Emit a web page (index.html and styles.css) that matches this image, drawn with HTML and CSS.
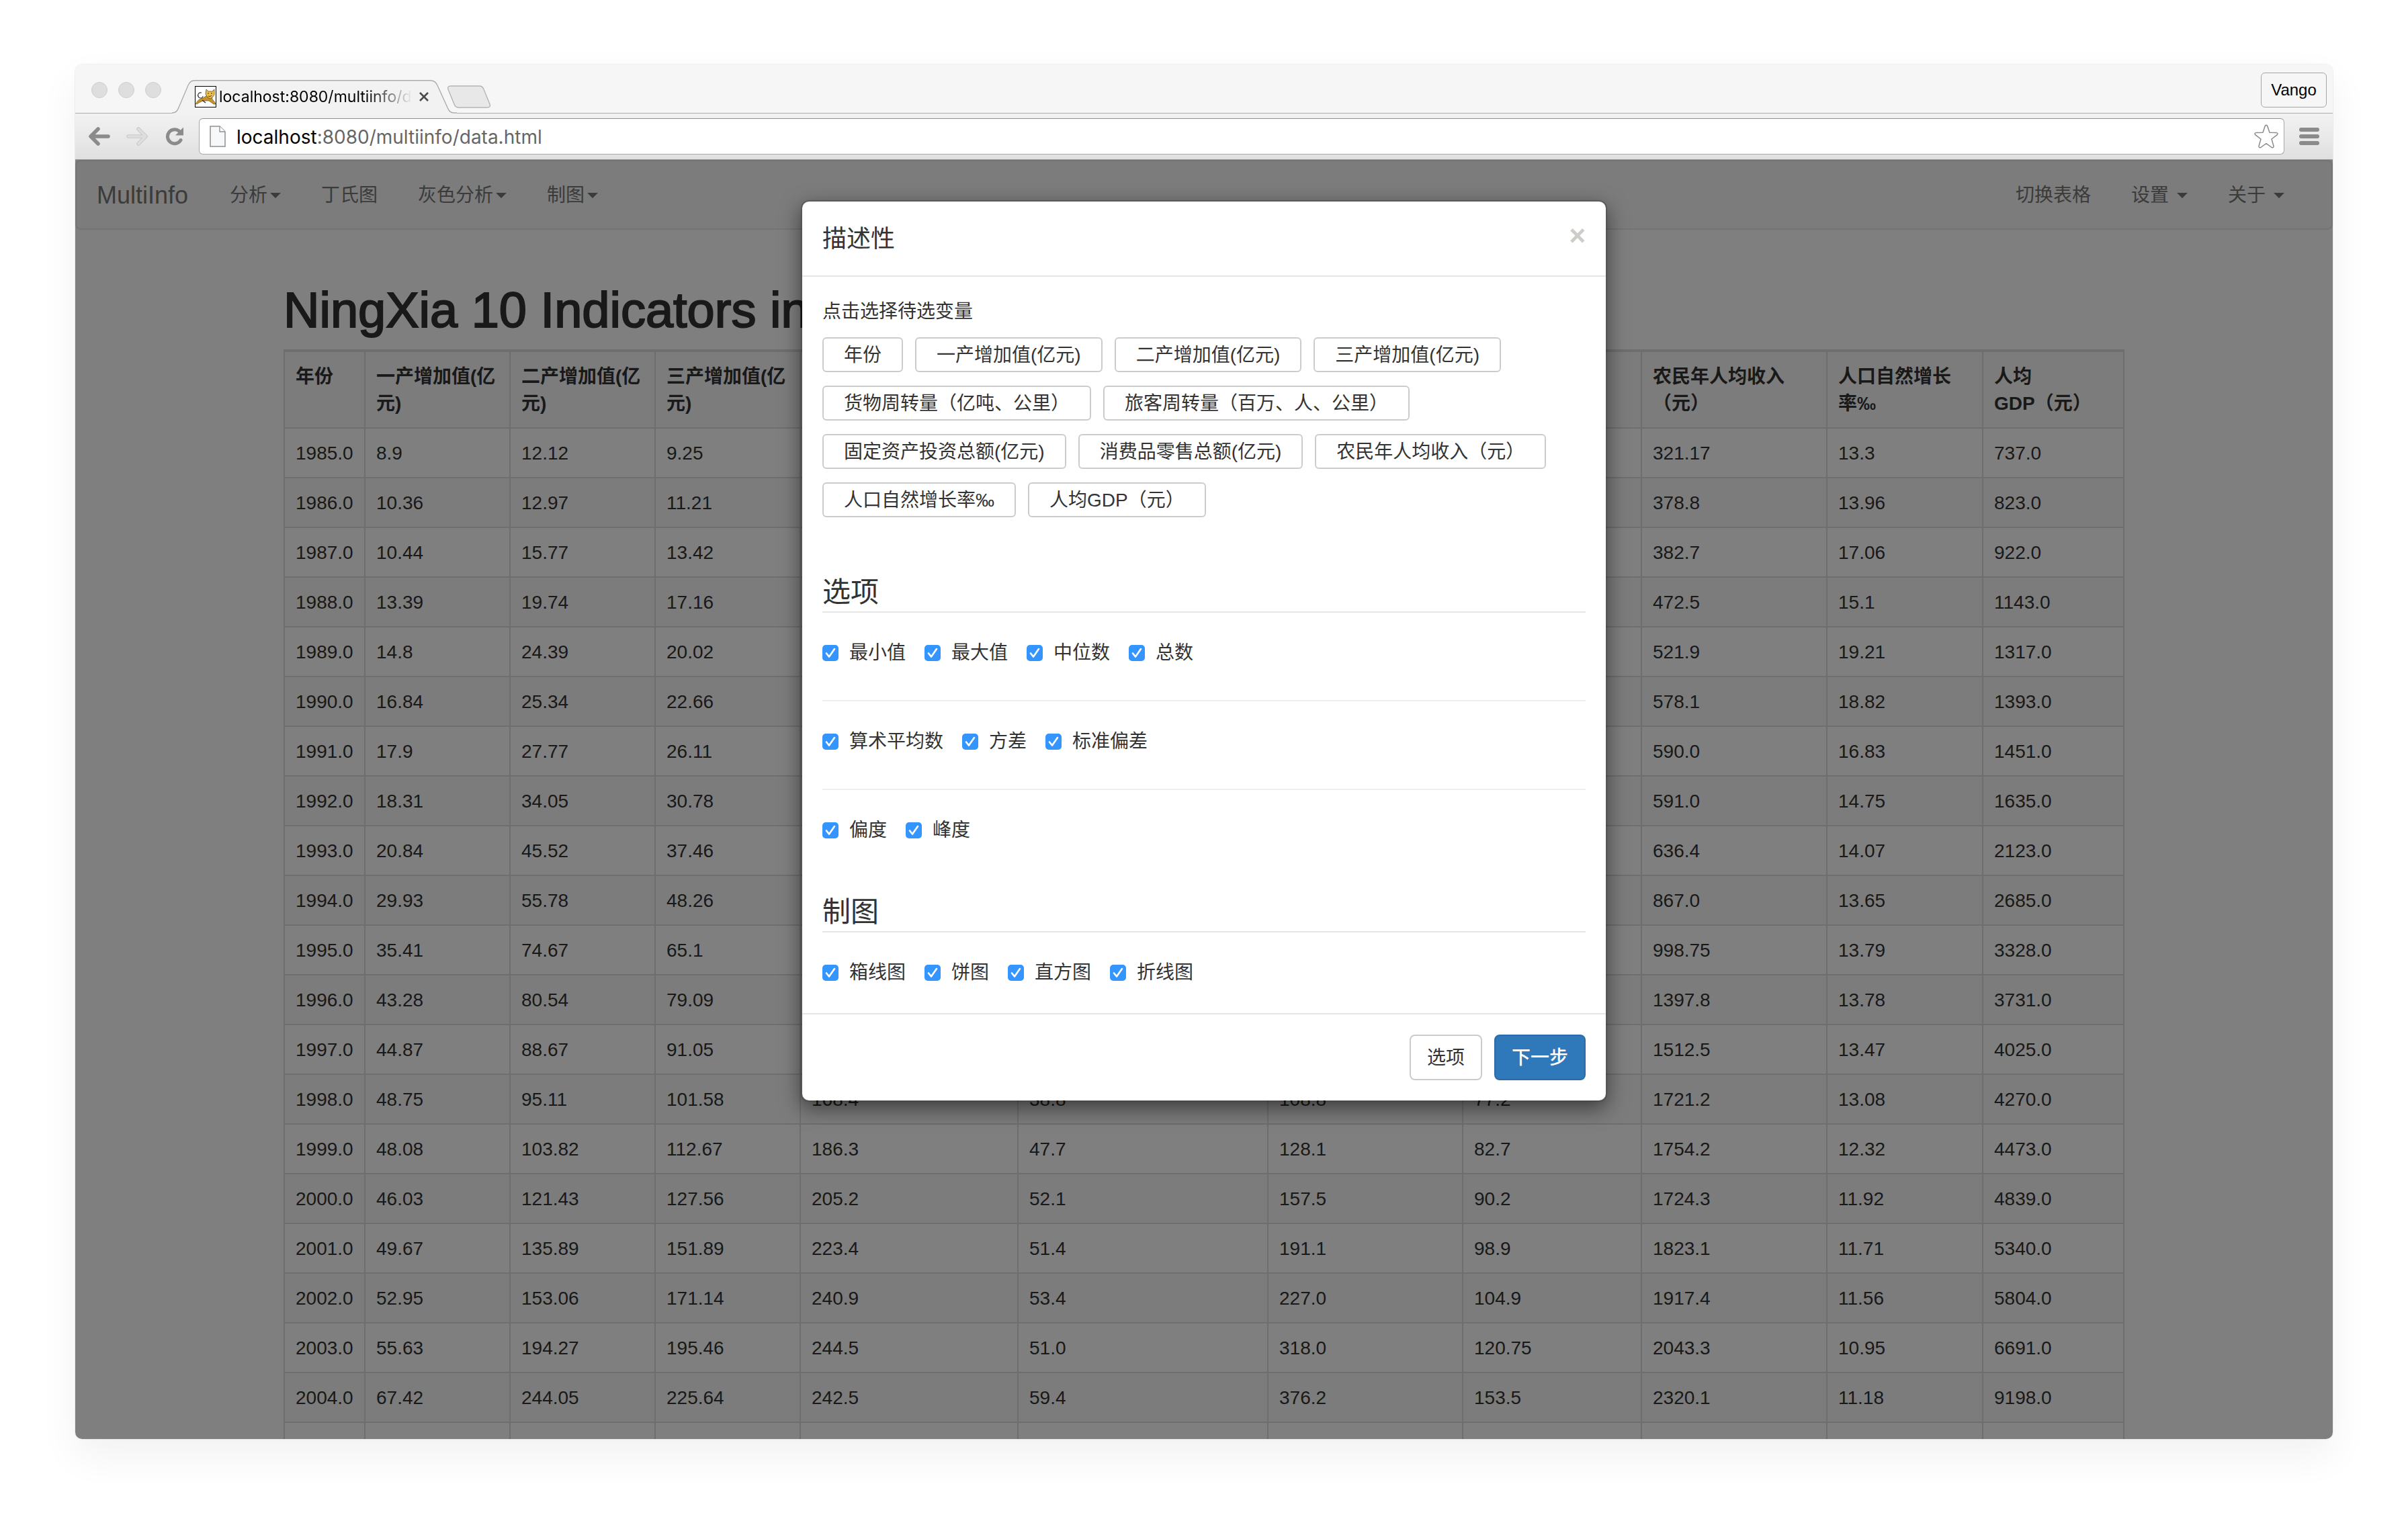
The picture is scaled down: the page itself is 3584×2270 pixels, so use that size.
FILE: index.html
```html
<!DOCTYPE html>
<html lang="zh-CN">
<head>
<meta charset="utf-8">
<title>MultiInfo</title>
<link rel="stylesheet" href="styles.css">
</head>
<body>
<div class="window">
  <header class="chrome">
    <div class="tabstrip">
      <div class="lights"><span></span><span></span><span></span></div>
      <div class="tab">
        <svg class="tab-shape" viewBox="0 0 424 50" preserveAspectRatio="none" aria-hidden="true">
          <path d="M0 50V49C6 49 8 46 10 41L24 8C27 2 29 .8 36 .8H384C390 .8 393 3 395 8L410 41C412 46 414 49 420 49H424V50Z" fill="#f2f2f2"/>
          <path d="M0 49C6 49 8 46 10 41L24 8C27 2 29 .8 36 .8H384C390 .8 393 3 395 8L410 41C412 46 414 49 420 49H424" fill="none" stroke="#acacac" stroke-width="1.4"/>
        </svg>
        <svg class="favicon" viewBox="0 0 32 32" aria-hidden="true">
          <rect x=".5" y=".5" width="31" height="31" fill="#fff" stroke="#000"/>
          <path d="M10 10C5 9 3 14 6 17C9 19 12 18 12 15" fill="none" stroke="#333" stroke-width="1.1"/>
          <path d="M1.500 27C3 22 7 19 12 18L18 14L25 17C26 21 30 23 31 27H28L21 22L12 22L6 25L3 27Z" fill="#c8922a" stroke="#5b4720" stroke-width=".6"/>
          <path d="M11 21L16 25" stroke="#333" stroke-width="1.6"/>
          <path d="M17 5L20 8H26L29 5V13L26 17L23 19L19 17L16 12Z" fill="#efc04a" stroke="#4d3a12" stroke-width=".7"/>
          <path d="M20 10V12M25 10V12M20 15Q23 17 25 14" stroke="#3b2f14" fill="none"/>
        </svg>
        <span class="tab-title">localhost:8080/multiinfo/d</span>
        <button class="tab-close" type="button" aria-label="关闭标签页">
          <svg viewBox="0 0 14 14" aria-hidden="true"><path d="M1 1L13 13M13 1L1 13" stroke="#4a4a4a" stroke-width="2.6"/></svg>
        </button>
      </div>
      <button class="new-tab" type="button" aria-label="新标签页">
        <svg viewBox="0 0 64 34" aria-hidden="true"><path d="M5 1H47C51 1 53 3 54 6L63 28C64 31 63 33 59 33H17C13 33 11 31 10 28L1 6C0 3 1 1 5 1Z" fill="#e8e8e8" stroke="#b4b4b4" stroke-width="1.4"/></svg>
      </button>
      <button class="profile" type="button">Vango</button>
    </div>
    <div class="toolbar">
      <button class="tool" type="button" aria-label="后退">
        <svg viewBox="0 0 32 28" aria-hidden="true"><path d="M14 3L3 14L14 25M4 14H29" fill="none" stroke="#8b8b8b" stroke-width="5.5" stroke-linecap="round" stroke-linejoin="round"/></svg>
      </button>
      <button class="tool" type="button" aria-label="前进">
        <svg viewBox="0 0 32 28" aria-hidden="true"><path d="M18 3L29 14L18 25M28 14H3" fill="none" stroke="#c9c9c9" stroke-width="5.5" stroke-linecap="round" stroke-linejoin="round"/><path d="M18 3L29 14L18 25M26 14H3" fill="none" stroke="#dedede" stroke-width="3.5" stroke-linecap="round" stroke-linejoin="round"/></svg>
      </button>
      <button class="tool reload" type="button" aria-label="重新加载">
        <svg viewBox="0 0 28 28" aria-hidden="true"><path d="M21.5 7A10.500 10.500 0 1 0 23 19.500" fill="none" stroke="#8b8b8b" stroke-width="5" stroke-linecap="round"/><path d="M27 .5V12.500H15Z" fill="#8b8b8b"/></svg>
      </button>
      <div class="omnibox">
        <svg class="page-icon" viewBox="0 0 24 32" aria-hidden="true"><path d="M1 1H15L23 9V31H1Z" fill="#f7f8fa" stroke="#8e8e8e" stroke-width="1.5"/><path d="M15 1V9H23" fill="#fff" stroke="#8e8e8e" stroke-width="1.3"/></svg>
        <p class="url"><b>localhost</b>:8080/multiinfo/data.html</p>
        <svg class="star" viewBox="0 0 36 36" aria-hidden="true"><path d="M16.300 2.500Q18 .2 19.700 2.500L23 12.200L33.500 12.600Q36 13.500 34.300 15.600L26 22L29 32.500Q29.200 35.500 26.300 34.500L18 28.700L9.700 34.500Q6.800 35.500 7 32.500L10 22L1.700 15.600Q0 13.500 2.500 12.600L13 12.200Z" fill="#fff" stroke="#8a8a8a" stroke-width="1.5" stroke-linejoin="round"/></svg>
      </div>
      <button class="menu" type="button" aria-label="菜单"><span></span><span></span><span></span></button>
    </div>
  </header>

  <div class="viewport">
    <nav class="navbar">
      <a class="brand" href="#">MultiInfo</a>
      <ul class="nav">
        <li><a href="#">分析<i class="caret"></i></a></li>
        <li><a href="#">丁氏图</a></li>
        <li><a href="#">灰色分析<i class="caret"></i></a></li>
        <li><a href="#">制图<i class="caret"></i></a></li>
      </ul>
      <ul class="nav nav-right">
        <li><a href="#">切换表格</a></li>
        <li><a href="#">设置<i class="caret"></i></a></li>
        <li><a href="#">关于<i class="caret"></i></a></li>
      </ul>
    </nav>

    <main class="container">
      <h1>NingXia 10 Indicators in</h1>
      <table class="data">
        <colgroup>
          <col class="c-year"><col class="c-value"><col class="c-value"><col class="c-value"><col class="c-freight"><col class="c-travel"><col class="c-invest"><col class="c-retail"><col class="c-income"><col class="c-growth"><col class="c-gdp">
        </colgroup>
        <thead>
          <tr><th>年份</th><th>一产增加值(亿元)</th><th>二产增加值(亿元)</th><th>三产增加值(亿元)</th><th></th><th></th><th></th><th></th><th>农民年人均收入（元）</th><th>人口自然增长率‰</th><th>人均<br>GDP（元）</th></tr>
        </thead>
        <tbody>
          <tr><td>1985.0</td><td>8.9</td><td>12.12</td><td>9.25</td><td></td><td></td><td></td><td></td><td>321.17</td><td>13.3</td><td>737.0</td></tr>
          <tr><td>1986.0</td><td>10.36</td><td>12.97</td><td>11.21</td><td></td><td></td><td></td><td></td><td>378.8</td><td>13.96</td><td>823.0</td></tr>
          <tr><td>1987.0</td><td>10.44</td><td>15.77</td><td>13.42</td><td></td><td></td><td></td><td></td><td>382.7</td><td>17.06</td><td>922.0</td></tr>
          <tr><td>1988.0</td><td>13.39</td><td>19.74</td><td>17.16</td><td></td><td></td><td></td><td></td><td>472.5</td><td>15.1</td><td>1143.0</td></tr>
          <tr><td>1989.0</td><td>14.8</td><td>24.39</td><td>20.02</td><td></td><td></td><td></td><td></td><td>521.9</td><td>19.21</td><td>1317.0</td></tr>
          <tr><td>1990.0</td><td>16.84</td><td>25.34</td><td>22.66</td><td></td><td></td><td></td><td></td><td>578.1</td><td>18.82</td><td>1393.0</td></tr>
          <tr><td>1991.0</td><td>17.9</td><td>27.77</td><td>26.11</td><td></td><td></td><td></td><td></td><td>590.0</td><td>16.83</td><td>1451.0</td></tr>
          <tr><td>1992.0</td><td>18.31</td><td>34.05</td><td>30.78</td><td></td><td></td><td></td><td></td><td>591.0</td><td>14.75</td><td>1635.0</td></tr>
          <tr><td>1993.0</td><td>20.84</td><td>45.52</td><td>37.46</td><td></td><td></td><td></td><td></td><td>636.4</td><td>14.07</td><td>2123.0</td></tr>
          <tr><td>1994.0</td><td>29.93</td><td>55.78</td><td>48.26</td><td></td><td></td><td></td><td></td><td>867.0</td><td>13.65</td><td>2685.0</td></tr>
          <tr><td>1995.0</td><td>35.41</td><td>74.67</td><td>65.1</td><td></td><td></td><td></td><td></td><td>998.75</td><td>13.79</td><td>3328.0</td></tr>
          <tr><td>1996.0</td><td>43.28</td><td>80.54</td><td>79.09</td><td></td><td></td><td></td><td></td><td>1397.8</td><td>13.78</td><td>3731.0</td></tr>
          <tr><td>1997.0</td><td>44.87</td><td>88.67</td><td>91.05</td><td></td><td></td><td></td><td></td><td>1512.5</td><td>13.47</td><td>4025.0</td></tr>
          <tr><td>1998.0</td><td>48.75</td><td>95.11</td><td>101.58</td><td>168.4</td><td>38.8</td><td>108.8</td><td>77.2</td><td>1721.2</td><td>13.08</td><td>4270.0</td></tr>
          <tr><td>1999.0</td><td>48.08</td><td>103.82</td><td>112.67</td><td>186.3</td><td>47.7</td><td>128.1</td><td>82.7</td><td>1754.2</td><td>12.32</td><td>4473.0</td></tr>
          <tr><td>2000.0</td><td>46.03</td><td>121.43</td><td>127.56</td><td>205.2</td><td>52.1</td><td>157.5</td><td>90.2</td><td>1724.3</td><td>11.92</td><td>4839.0</td></tr>
          <tr><td>2001.0</td><td>49.67</td><td>135.89</td><td>151.89</td><td>223.4</td><td>51.4</td><td>191.1</td><td>98.9</td><td>1823.1</td><td>11.71</td><td>5340.0</td></tr>
          <tr><td>2002.0</td><td>52.95</td><td>153.06</td><td>171.14</td><td>240.9</td><td>53.4</td><td>227.0</td><td>104.9</td><td>1917.4</td><td>11.56</td><td>5804.0</td></tr>
          <tr><td>2003.0</td><td>55.63</td><td>194.27</td><td>195.46</td><td>244.5</td><td>51.0</td><td>318.0</td><td>120.75</td><td>2043.3</td><td>10.95</td><td>6691.0</td></tr>
          <tr><td>2004.0</td><td>67.42</td><td>244.05</td><td>225.64</td><td>242.5</td><td>59.4</td><td>376.2</td><td>153.5</td><td>2320.1</td><td>11.18</td><td>9198.0</td></tr>
          <tr><td></td><td></td><td></td><td></td><td></td><td></td><td></td><td></td><td></td><td></td><td></td></tr>
        </tbody>
      </table>
    </main>

    <div class="backdrop">
      <section class="modal" role="dialog" aria-labelledby="modal-title">
        <div class="modal-header">
          <h4 id="modal-title">描述性</h4>
          <button class="close" type="button" aria-label="关闭">×</button>
        </div>
        <form class="modal-body">
          <p class="hint">点击选择待选变量</p>
          <div class="chips">
            <button type="button">年份</button>
            <button type="button">一产增加值(亿元)</button>
            <button type="button">二产增加值(亿元)</button>
            <button type="button">三产增加值(亿元)</button>
            <button type="button">货物周转量（亿吨、公里）</button>
            <button type="button">旅客周转量（百万、人、公里）</button>
            <button type="button">固定资产投资总额(亿元)</button>
            <button type="button">消费品零售总额(亿元)</button>
            <button type="button">农民年人均收入（元）</button>
            <button type="button">人口自然增长率‰</button>
            <button type="button">人均GDP（元）</button>
          </div>
          <fieldset>
            <legend>选项</legend>
            <div class="checks">
              <label><input type="checkbox" checked>最小值</label>
              <label><input type="checkbox" checked>最大值</label>
              <label><input type="checkbox" checked>中位数</label>
              <label><input type="checkbox" checked>总数</label>
            </div>
            <hr>
            <div class="checks">
              <label><input type="checkbox" checked>算术平均数</label>
              <label><input type="checkbox" checked>方差</label>
              <label><input type="checkbox" checked>标准偏差</label>
            </div>
            <hr>
            <div class="checks">
              <label><input type="checkbox" checked>偏度</label>
              <label><input type="checkbox" checked>峰度</label>
            </div>
          </fieldset>
          <fieldset>
            <legend>制图</legend>
            <div class="checks">
              <label><input type="checkbox" checked>箱线图</label>
              <label><input type="checkbox" checked>饼图</label>
              <label><input type="checkbox" checked>直方图</label>
              <label><input type="checkbox" checked>折线图</label>
            </div>
          </fieldset>
        </form>
        <div class="modal-footer">
          <button class="btn" type="button">选项</button>
          <button class="btn btn-primary" type="button">下一步</button>
        </div>
      </section>
    </div>
  </div>
</div>
</body>
</html>
```
FILE: styles.css
```css
* { box-sizing: border-box; }

body {
  margin: 0;
  height: 100vh;
  padding: 96px 112px 128px;
  display: flex;
  background: #fff;
  color: #333;
  font: 28px/40px "Liberation Sans", "Noto Sans CJK SC", sans-serif;
  text-spacing-trim: space-all;
}

button { font: inherit; color: inherit; margin: 0; padding: 0; border: 0; background: none; }
a { color: inherit; text-decoration: none; }
svg { display: block; }

.window {
  flex: 1;
  min-width: 0;
  display: flex;
  flex-direction: column;
  border-radius: 10px;
  overflow: hidden;
  box-shadow: 0 0 2px rgba(0, 0, 0, .18), 0 24px 60px rgba(0, 0, 0, .06);
}

/* Browser chrome */
.tabstrip {
  height: 73px;
  padding: 0 9px 0 24px;
  display: flex;
  align-items: flex-end;
  background: #f6f6f6;
  box-shadow: inset 0 -1px #acacac;
}
.lights { display: flex; gap: 16px; padding-bottom: 23px; }
.lights span { width: 24px; height: 24px; border-radius: 50%; background: #dedede; border: 1px solid #cfcfcf; }

.tab {
  position: relative;
  width: 424px;
  height: 50px;
  margin-left: 16px;
  padding: 0 50px 0 34px;
  display: flex;
  align-items: center;
  gap: 4px;
}
.tab-shape { position: absolute; inset: 0; width: 100%; height: 100%; }
.favicon { position: relative; width: 32px; height: 32px; flex: none; }
.tab-title {
  position: relative;
  width: 288px;
  flex: none;
  white-space: nowrap;
  color: #000;
  font: 23px/32px Inter, sans-serif;
  mask-image: linear-gradient(to right, #000 76%, transparent);
}
.tab-close { position: relative; width: 14px; height: 14px; margin-left: 6px; }
.tab-close svg { width: 14px; height: 14px; }
.new-tab { margin: 0 0 8px -14px; }
.new-tab svg { width: 64px; height: 34px; }
.profile {
  margin: 0 0 9px auto;
  width: 98px;
  height: 52px;
  border: 1px solid #a6a6a6;
  border-radius: 6px;
  color: #000;
  font-size: 24px;
}

.toolbar {
  height: 69px;
  padding: 0 20px;
  display: flex;
  align-items: center;
  background: linear-gradient(#f2f2f2, #e0e0e0);
  border-bottom: 1px solid #9c9c9c;
}
.tool svg { width: 32px; height: 28px; }
.tool + .tool { margin-left: 24px; }
.tool + .reload { margin-left: 26px; }
.reload svg { width: 28px; }
.omnibox {
  flex: 1;
  height: 54px;
  margin: 0 22px;
  padding: 0 8px 0 15px;
  display: flex;
  align-items: center;
  gap: 16px;
  background: #fff;
  border: 1px solid #a9a9a9;
  border-top-color: #8f8f8f;
  border-radius: 6px;
}
.page-icon { width: 24px; height: 32px; }
.url { flex: 1; margin: 0; padding-top: 2px; color: #666; font: 28px/40px Inter, sans-serif; }
.url b { font-weight: 400; color: #000; }
.star { width: 36px; height: 36px; }
.menu { width: 30px; display: grid; gap: 4px; }
.menu span { height: 6px; border-radius: 3px; background: #8b8b8b; }

/* Page */
.viewport { position: relative; flex: 1; min-height: 0; overflow: hidden; background: #fff; }

.navbar {
  height: 104px;
  padding: 2px 40px 0 30px;
  display: flex;
  align-items: center;
  background: #f8f8f8;
  border: 2px solid #e7e7e7;
  border-radius: 8px;
  color: #777;
}
.brand { font-size: 36px; margin-right: 62px; }
.nav { display: flex; margin: 0; padding: 0; list-style: none; }
.nav a { padding: 30px; display: flex; align-items: center; }
.nav li:first-child a { padding-left: 0; }
.caret { margin-left: 4px; border: 8px solid transparent; border-top-color: currentColor; border-bottom: 0; }
.nav-right { margin-left: auto; }
.nav-right .caret { margin-left: 12px; }

.container { width: 100%; max-width: 2740px; margin: 0 auto; }
h1 {
  margin: 80px 0 18px;
  font-size: 74px;
  line-height: 80px;
  font-weight: 400;
  white-space: nowrap;
  -webkit-text-stroke: 2px currentColor;
}

.data { width: 100%; table-layout: fixed; border-collapse: separate; border-spacing: 0; border-left: 2px solid #ddd; }
.c-year { width: 120px; }
.c-value { width: 216px; }
.c-freight { width: 324px; }
.c-travel { width: 372px; }
.c-invest { width: 290px; }
.c-retail { width: 266px; }
.c-income { width: 276px; }
.c-growth { width: 232px; }
.c-gdp { width: 210px; }
.data th, .data td {
  height: 74px;
  padding: 17px 14px 15px 16px;
  border-right: 2px solid #ddd;
  border-bottom: 2px solid #ddd;
  text-align: left;
  vertical-align: top;
}
.data th { border-top: 4px solid #ddd; }
.data thead tr, .data tbody tr:nth-child(even) { background: #f9f9f9; }

/* Dialog */
.backdrop { position: absolute; inset: 0; padding: 60px 0; background: rgba(0, 0, 0, .5); }
.modal {
  width: 1200px;
  max-width: 100%;
  margin: 0 auto;
  background: #fff;
  background-clip: padding-box;
  border: 2px solid rgba(0, 0, 0, .2);
  border-radius: 12px;
  box-shadow: 0 10px 30px rgba(0, 0, 0, .5);
}
.modal-header {
  display: flex;
  justify-content: space-between;
  align-items: flex-start;
  padding: 30px;
  border-bottom: 2px solid #e5e5e5;
}
.modal-header h4 { margin: 0; padding-top: 2px; font-size: 36px; line-height: 48px; font-weight: 400; }
.close { color: #ccc; font-size: 42px; line-height: 42px; font-weight: 700; }

.modal-body { padding: 30px 30px 40px; }
.hint { margin: 0 0 18px; padding-top: 2px; }
.chips { display: flex; flex-wrap: wrap; gap: 20px 18px; margin-bottom: 80px; }
.chips button { height: 52px; padding: 2px 30px 0; border: 2px solid #ccc; border-radius: 6px; background: #fff; }

fieldset { margin: 0; padding: 0; border: 0; min-width: 0; }
fieldset + fieldset { margin-top: 70px; }
legend {
  width: 100%;
  margin-bottom: 40px;
  padding: 4px 0 0;
  border-bottom: 2px solid #e5e5e5;
  font-size: 42px;
  line-height: 56px;
}
.checks { display: flex; gap: 28px; }
.checks label { display: flex; align-items: center; gap: 16px; }
.checks input {
  appearance: none;
  width: 24px;
  height: 24px;
  margin: 0;
  border-radius: 5px;
  background: #3595ff url("data:image/svg+xml,%3Csvg xmlns='http://www.w3.org/2000/svg' viewBox='0 0 24 24'%3E%3Cpath d='M6 12.500L10 17.500L18 6' fill='none' stroke='%23fff' stroke-width='2.600' stroke-linecap='round' stroke-linejoin='round'/%3E%3C/svg%3E") center / 24px;
}
hr { margin: 50px 0 40px; border: 0; border-top: 2px solid #eee; }

.modal-footer { display: flex; justify-content: flex-end; gap: 18px; padding: 30px; border-top: 2px solid #e5e5e5; }
.btn { height: 68px; padding: 2px 24px 0; border: 2px solid #ccc; border-radius: 8px; background: #fff; }
.btn-primary { background: #2f79ba; border-color: #2b6ca8; color: #fff; font-weight: 500; }
```
